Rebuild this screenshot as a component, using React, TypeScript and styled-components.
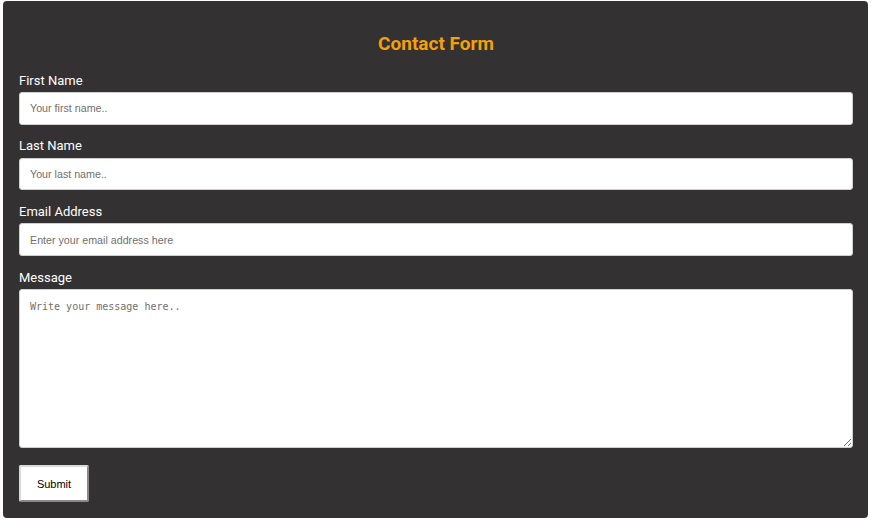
import React from 'react';
import styled, { createGlobalStyle } from 'styled-components';

const GlobalStyle = createGlobalStyle`
  body {
    margin: 0;
    background: #ffffff;
    font-family: Roboto, "Liberation Sans", Arial, sans-serif;
  }
`;

const App: React.FC = () => {
  return (
    <>
      <GlobalStyle />
      <Card>
        <Title>Contact Form</Title>
        <form onSubmit={(event) => event.preventDefault()}>
          <Field>
            <Label htmlFor="first-name">First Name</Label>
            <Input id="first-name" type="text" placeholder="Your first name.." />
          </Field>
          <Field>
            <Label htmlFor="last-name">Last Name</Label>
            <Input id="last-name" type="text" placeholder="Your last name.." />
          </Field>
          <Field>
            <Label htmlFor="email">Email Address</Label>
            <Input
              id="email"
              type="email"
              placeholder="Enter your email address here"
            />
          </Field>
          <Field>
            <Label htmlFor="message">Message</Label>
            <TextArea id="message" placeholder="Write your message here.." />
          </Field>
          <SubmitButton type="submit">Submit</SubmitButton>
        </form>
      </Card>
    </>
  );
};

const Card = styled.div`
  margin: 1px 3px;
  padding: 16px 15px 16px 16px;
  background: #333131;
  border-radius: 4px;
`;

const Title = styled.h2`
  margin: 15px 0;
  font-family: Roboto, "Liberation Sans", sans-serif;
  font-size: 19px;
  line-height: 24px;
  font-weight: 700;
  text-align: center;
  color: #f59f0b;
`;

const Field = styled.div`
  margin-bottom: 12px;

  &:last-of-type {
    margin-bottom: 17px;
  }
`;

const Label = styled.label`
  display: block;
  margin-bottom: 3.5px;
  padding-top: 0.5px;
  font-family: Roboto, "Liberation Sans", sans-serif;
  font-size: 13px;
  line-height: 17px;
  color: #ffffff;
`;

const Input = styled.input`
  display: block;
  box-sizing: border-box;
  width: 100%;
  height: 32.7px;
  padding: 0 10px;
  border: 1px solid #cfcfcf;
  border-radius: 3px;
  background: #ffffff;
  font-family: "Liberation Sans", Arial, sans-serif;
  font-size: 10.7px;
  color: #222;

  &::placeholder {
    color: #6f6f6f;
  }
`;

const TextArea = styled.textarea`
  display: block;
  box-sizing: border-box;
  width: 100%;
  height: 159px;
  padding: 11px 10px;
  border: 1px solid #cfcfcf;
  border-radius: 3px;
  background: #ffffff;
  font-family: "DejaVu Sans Mono", "Liberation Mono", monospace;
  font-size: 10px;
  color: #222;

  &::placeholder {
    color: #6f6f6f;
  }
`;

const SubmitButton = styled.button`
  display: block;
  box-sizing: border-box;
  width: 70px;
  height: 37px;
  border: 2px solid;
  border-color: #d9d9d9 #8a8a8a #8a8a8a #d9d9d9;
  border-radius: 2px;
  background: #ffffff;
  font-family: "Liberation Sans", Arial, sans-serif;
  font-size: 11px;
  color: #000;
  cursor: pointer;
`;

export default App;
